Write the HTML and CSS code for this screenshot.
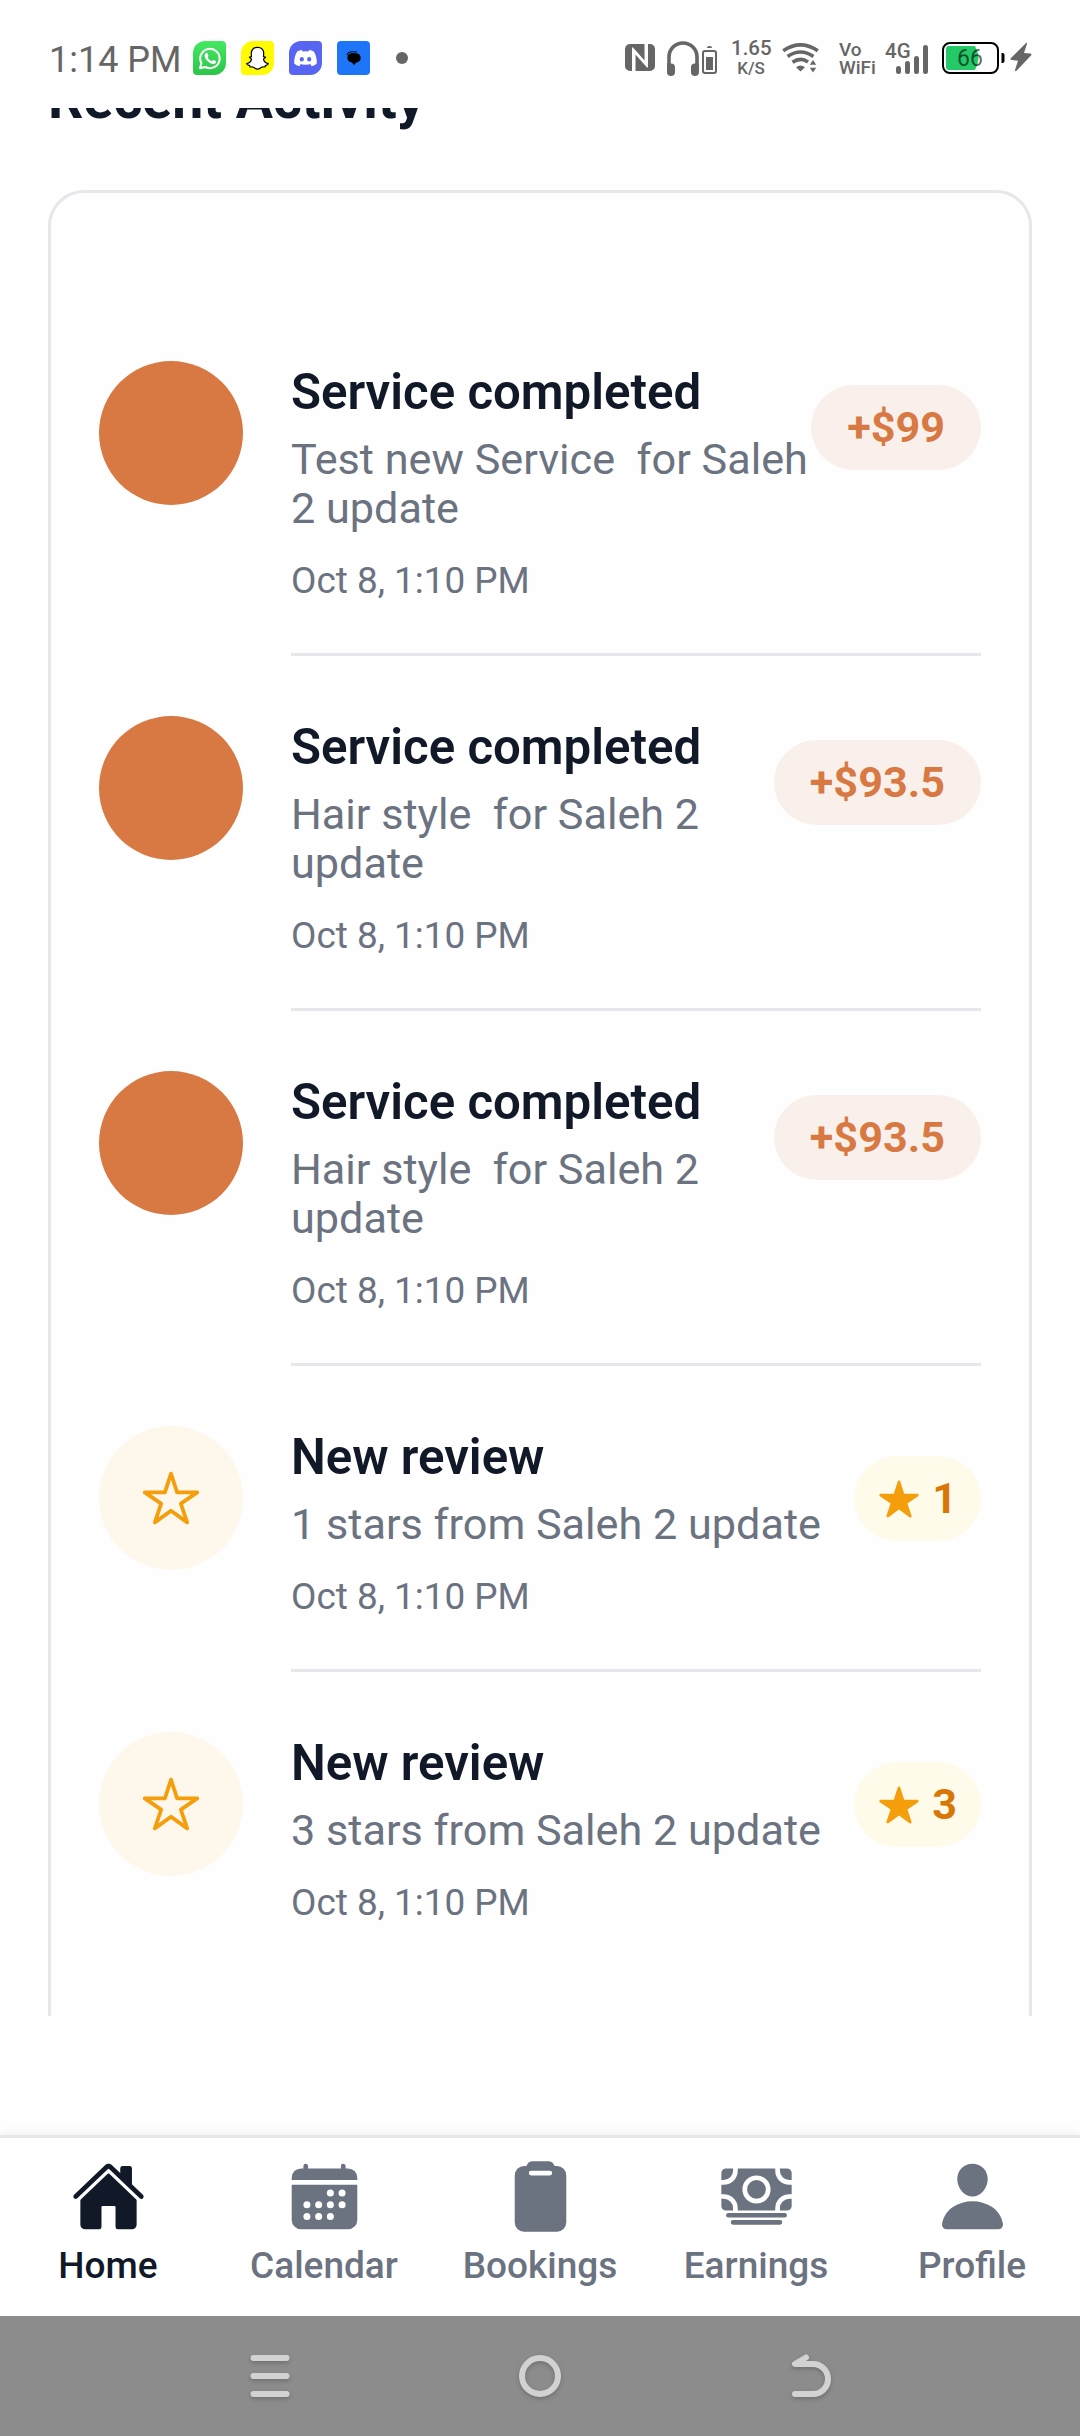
FILE: index.html
```html
<!DOCTYPE html>
<html lang="en">
<head>
<meta charset="utf-8">
<title>Recent Activity</title>
<link rel="stylesheet" href="styles.css">
</head>
<body>
<svg class="defs" aria-hidden="true">
  <symbol id="star-outline" viewBox="0 0 512 512"><path d="M480 208H308L256 48l-52 160H32l140 96-54 160 138-100 138 100-54-160z" fill="none" stroke="currentColor" stroke-width="32" stroke-linejoin="round"/></symbol>
  <symbol id="star" viewBox="0 0 512 512"><path fill="currentColor" d="M394 480a16 16 0 01-9.39-3L256 383.76 127.39 477a16 16 0 01-24.55-18.08L153 310.35 23 221.2a16 16 0 019-29.2h160.38l48.4-148.95a16 16 0 0130.44 0l48.4 149H480a16 16 0 019.05 29.2L359 310.35l50.13 148.53A16 16 0 01394 480z"/></symbol>
</svg>
<div class="screen">
  <header class="status">
    <span class="clock">1:14 PM</span>
    <div class="apps">
      <svg width="33" height="34" viewBox="0 0 33 34"><defs><linearGradient id="wa" x2="0" y2="1"><stop stop-color="#45e862"/><stop offset="1" stop-color="#2bc549"/></linearGradient></defs><path d="M12 0h17a4 4 0 014 4v18a12 12 0 01-12 12H4a4 4 0 01-4-4V12A12 12 0 0112 0z" fill="url(#wa)"/><path d="M7 27.3l1.4-5.2A9.7 9.7 0 1112.3 26z" fill="none" stroke="#fff" stroke-width="2" stroke-linejoin="round"/><path d="M12.4 12.4c.8-.9 1.7-.8 2.1.1l.9 2.1c.2.6-.9 1.5-.7 1.9 1 1.7 2.2 2.8 4 3.6.5.2 1.2-1.4 1.8-1.2l2.2 1.1c.7.4.4 2-.6 2.600-2 1.2-5.2-.2-7.6-2.600-2.5-2.5-3.8-5.9-2.1-7.600z" fill="#fff"/></svg>
      <svg width="33" height="34" viewBox="0 0 33 34"><path d="M12 0h17a4 4 0 014 4v18a12 12 0 01-12 12H4a4 4 0 01-4-4V12A12 12 0 0112 0z" fill="#fffc00"/><path d="M16.5 6.3c3.8 0 6.2 2.5 6.2 6.1l-.2 3.3c.8.2 1.6-.1 2 .4.3.8-1.5 1.300-2 2 .3 2.200 2.700 4 4.800 4.600-.1 1.300-2 1.500-2.900 1.800l-.5 1.500c-1.200.1-2.400-.3-3.500.3-1.300.8-2.200 1.900-3.900 1.900s-2.600-1.100-3.900-1.900c-1.100-.6-2.300-.2-3.500-.3l-.5-1.500c-.9-.3-2.800-.5-2.900-1.800 2.100-.6 4.500-2.400 4.800-4.600-.5-.7-2.300-1.200-2-2 .4-.5 1.200-.2 2-.4l-.2-3.300c0-3.600 2.400-6.100 6.200-6.100z" fill="#fff" stroke="#000" stroke-width="1.2" stroke-linejoin="round"/></svg>
      <svg width="33" height="34" viewBox="0 0 33 34"><path d="M12 0h17a4 4 0 014 4v18a12 12 0 01-12 12H4a4 4 0 01-4-4V12A12 12 0 0112 0z" fill="#5865f2"/><path fill="#fff" fill-rule="evenodd" d="M12.8 9l.9 1.4a19 19 0 015.6 0L20.2 9c1.700.3 3.200.8 4.600 1.500 2.200 3.700 3.300 7.700 2.900 12.200a16 16 0 01-5 2.600l-1.300-2 1.600-.9a18 18 0 01-13 0l1.600.9-1.300 2a16 16 0 01-5-2.600c-.4-4.500.7-8.500 2.900-12.200A18 18 0 0112.800 9zm0 7a2.100 2.300 0 100 4.600 2.100 2.300 0 000-4.600zm7.400 0a2.100 2.300 0 100 4.600 2.100 2.300 0 000-4.600z"/></svg>
      <svg width="33" height="34" viewBox="0 0 33 34"><rect width="33" height="34" rx="4" fill="#1f75f8"/><path d="M9.900 14.200a4 4 0 014-3.300h6" fill="none" stroke="#000" stroke-width="1"/><path d="M14 12.300h5a4.600 4.600 0 011.4 9c-1.600.7-2.800 1.400-3.400 3.200-.8-1.800-1.300-2.500-2.900-3.200a4.600 4.600 0 01-.1-9z"/></svg>
    </div>
    <i class="dot"></i>
    <div class="sys">
      <svg class="nfc" width="30" height="27" viewBox="0 0 30 27"><path fill="#666" d="M5 0h14.500v16.500L8 3.500H7V27H5a5 5 0 01-5-5V5a5 5 0 015-5zM23 0h2a5 5 0 015 5v17a5 5 0 01-5 5H10.500V10.500L22 23.500h1z"/></svg>
      <svg class="phones" width="32" height="35" viewBox="0 0 32 35"><path d="M2 27V16a14 14 0 0128 0v11" fill="none" stroke="#666" stroke-width="3.600"/><path fill="#666" d="M0 22.500h4a4 4 0 014 4V31a4 4 0 01-8 0zM32 22.500h-4a4 4 0 00-4 4V31a4 4 0 008 0z"/></svg>
      <svg class="cell" width="15" height="28" viewBox="0 0 15 28"><path d="M5 2c0-2.700 5-2.700 5 0z" fill="#666"/><rect x="1" y="5" width="13" height="22" rx="2" fill="none" stroke="#666" stroke-width="2"/><path d="M4 11h7v13H4z" fill="#666"/></svg>
      <div class="rate"><b>1.65</b><small>K/S</small></div>
      <svg class="wifi" width="37" height="30" viewBox="0 0 37 30"><g fill="none" stroke="#666" stroke-width="3.600"><path d="M1.200 7.700q17.300-11.800 34.600 0"/><path d="M5.600 13.500q12.900-9 25.800 0"/><path d="M10.500 19.300q8-5.600 15.500-.4"/></g><path fill="#666" d="M14 24.200q4.500-3.300 9 0L18.500 28.500zM31 17l3.200 4.800h-6.400zM31 29.500l3.200-4.800h-6.400z"/></svg>
      <div class="vo"><b>Vo</b><b>WiFi</b></div>
      <div class="net"><b>4G</b><svg width="32" height="29" viewBox="0 0 32 29"><path d="M2.500 23.500v3M11.500 18.500v8M20.500 13.500v13M29.500 2.500v24" stroke="#666" stroke-width="5" stroke-linecap="round"/></svg></div>
      <div class="battery"><svg width="63" height="32" viewBox="0 0 63 32"><rect x="1" y="1" width="55" height="30" rx="7" fill="none" stroke="#000" stroke-width="2"/><path d="M7 4h26q3.500 6 3.500 12T33 28H7a3 3 0 01-3-3V7a3 3 0 013-3z" fill="#25c968"/><path d="M59.500 11h1a2 2 0 012 2v6a2 2 0 01-2 2h-1z"/></svg><span>66</span></div>
      <svg class="bolt" width="22" height="30" viewBox="0 0 22 30"><path fill="#666" d="M16 1L1 16q-1.500 1.800.8 2.100L8 18.800 5 28q0 2 1.500.8L21 13.500q1.300-1.700-.8-1.900l-6.200-.5L17 1.700Q17-.3 16 1z"/></svg>
    </div>
  </header>

  <main class="content">
    <h1>Recent Activity</h1>
    <section class="card">
      <article class="row">
        <div class="avatar done"></div>
        <div class="body">
          <div class="line">
            <div class="info"><h2>Service completed</h2><p>Test new Service  for Saleh 2 update</p><time>Oct 8, 1:10 PM</time></div>
            <div class="pill">+$99</div>
          </div>
        </div>
      </article>
      <article class="row">
        <div class="avatar done"></div>
        <div class="body">
          <div class="line">
            <div class="info"><h2>Service completed</h2><p>Hair style  for Saleh 2 update</p><time>Oct 8, 1:10 PM</time></div>
            <div class="pill">+$93.5</div>
          </div>
        </div>
      </article>
      <article class="row">
        <div class="avatar done"></div>
        <div class="body">
          <div class="line">
            <div class="info"><h2>Service completed</h2><p>Hair style  for Saleh 2 update</p><time>Oct 8, 1:10 PM</time></div>
            <div class="pill">+$93.5</div>
          </div>
        </div>
      </article>
      <article class="row">
        <div class="avatar review"><svg width="60" height="60"><use href="#star-outline"/></svg></div>
        <div class="body">
          <div class="line">
            <div class="info"><h2>New review</h2><p>1 stars from Saleh 2 update</p><time>Oct 8, 1:10 PM</time></div>
            <div class="pill rating"><svg width="42" height="42"><use href="#star"/></svg>1</div>
          </div>
        </div>
      </article>
      <article class="row">
        <div class="avatar review"><svg width="60" height="60"><use href="#star-outline"/></svg></div>
        <div class="body">
          <div class="line">
            <div class="info"><h2>New review</h2><p>3 stars from Saleh 2 update</p><time>Oct 8, 1:10 PM</time></div>
            <div class="pill rating"><svg width="42" height="42"><use href="#star"/></svg>3</div>
          </div>
        </div>
      </article>
    </section>
  </main>

  <nav class="tabs">
    <a class="tab active"><svg viewBox="0 0 512 512"><path d="M261.56 101.28a8 8 0 00-11.06 0L66.4 277.15a8 8 0 00-2.47 5.79L63.9 448a32 32 0 0032 32H192a16 16 0 0016-16V328a8 8 0 018-8h80a8 8 0 018 8v136a16 16 0 0016 16h96.060a32 32 0 0032-32V282.940a8 8 0 00-2.470-5.790z"/><path d="M490.910 244.150l-74.800-71.560V64a16 16 0 00-16-16h-48a16 16 0 00-16 16v32l-57.920-55.380C272.770 35.140 264.710 32 256 32c-8.680 0-16.720 3.140-22.140 8.630l-212.700 203.500c-6.220 6-7 15.870-1.340 22.370A16 16 0 0043 267.560L250.500 69.280a8 8 0 0111.060 0l207.520 198.280a16 16 0 0022.590-.44c6.140-6.360 5.630-16.860-.76-22.970z"/></svg><span>Home</span></a>
    <a class="tab"><svg viewBox="0 0 512 512"><path d="M480 128a64 64 0 00-64-64h-16V48.450c0-8.610-6.620-16-15.230-16.430A16 16 0 00368 48v16H144V48.450c0-8.610-6.620-16-15.230-16.430A16 16 0 00112 48v16H96a64 64 0 00-64 64v12a4 4 0 004 4h440a4 4 0 004-4zM32 416a64 64 0 0064 64h320a64 64 0 0064-64V179a3 3 0 00-3-3H35a3 3 0 00-3 3z"/><g fill="#fff"><circle cx="296" cy="232" r="24"/><circle cx="376" cy="232" r="24"/><circle cx="136" cy="312" r="24"/><circle cx="216" cy="312" r="24"/><circle cx="296" cy="312" r="24"/><circle cx="376" cy="312" r="24"/><circle cx="136" cy="392" r="24"/><circle cx="216" cy="392" r="24"/><circle cx="296" cy="392" r="24"/></g></svg><span>Calendar</span></a>
    <a class="tab"><svg viewBox="0 0 512 512"><path d="M368 48h-11.410a8 8 0 01-7.440-5.080A42.180 42.180 0 00309.870 16H202.130a42.180 42.180 0 00-39.280 26.920 8 8 0 01-7.440 5.080H144a64 64 0 00-64 64v320a64 64 0 0064 64h224a64 64 0 0064-64V112a64 64 0 00-64-64zm-48.130 64H192.130a16 16 0 010-32h127.740a16 16 0 010 32z"/></svg><span>Bookings</span></a>
    <a class="tab"><svg viewBox="0 0 512 512"><path d="M448 400H64a16 16 0 010-32h384a16 16 0 010 32zM416 448H96a16 16 0 010-32h320a16 16 0 010 32zM32 272H16v48a32 32 0 0032 32h48v-16a64.070 64.070 0 00-64-64z"/><path fill-rule="evenodd" d="M480 240h16v-64h-16a96.110 96.110 0 01-96-96V64H128v16a96.110 96.110 0 01-96 96H16v64h16a96.110 96.110 0 0196 96v16h256v-16a96.110 96.110 0 0196-96zM256 304a96 96 0 1196-96 96.110 96.110 0 01-96 96z"/><circle cx="256" cy="208" r="64"/><path d="M480 272a64.070 64.070 0 00-64 64v16h48a32 32 0 0032-32v-48zM480 144h16V96a32 32 0 00-32-32h-48v16a64.070 64.070 0 0064 64zM96 80V64H48a32 32 0 00-32 32v48h16a64.070 64.070 0 0064-64z"/></svg><span>Earnings</span></a>
    <a class="tab"><svg viewBox="0 0 512 512"><path d="M332.640 64.580C313.180 43.570 286 32 256 32c-30.160 0-57.430 11.500-76.800 32.380-19.580 21.110-29.120 49.800-26.880 80.780C156.760 206.280 203.270 256 256 256s99.160-49.710 103.670-110.820c2.270-30.700-7.330-59.330-27.030-80.600zM432 480H80a31 31 0 01-24.200-11.130c-6.500-7.770-9.120-18.380-7.180-29.110C57.060 392.940 83.400 353.610 124.800 326c36.780-24.510 83.370-38 131.200-38s94.420 13.500 131.200 38c41.400 27.600 67.740 66.930 76.180 113.750 1.940 10.730-.68 21.340-7.180 29.110A31 31 0 01432 480z"/></svg><span>Profile</span></a>
  </nav>

  <footer class="softkeys">
    <svg viewBox="0 0 60 60"><path d="M13.500 12h33M13.500 30h33M13.500 48h33"/></svg>
    <svg viewBox="0 0 60 60"><circle cx="30" cy="30" r="18"/></svg>
    <svg viewBox="0 0 60 60"><path d="M26 11.500L15 18h18a15 15 0 010 30H15"/></svg>
  </footer>
</div>
</body>
</html>
```
FILE: styles.css
```css
* { box-sizing: border-box; margin: 0; padding: 0; }

body {
  width: 1080px;
  background: #fefefe;
  font-family: Roboto, "Liberation Sans", sans-serif;
  color: #111827;
}

svg { display: block; flex: none; }
.defs { width: 0; height: 0; position: absolute; }

.screen {
  height: 2436px;
  display: flex;
  flex-direction: column;
  overflow: hidden;
}

/* Status bar */
.status {
  height: 108px;
  flex: none;
  display: flex;
  align-items: flex-start;
  padding: 41px 48px 0 49px;
  color: #666;
}
.clock { font-size: 36px; line-height: 42px; margin-top: -2px; width: 144px; white-space: nowrap; }
.apps { display: flex; gap: 15px; }
.dot { width: 12px; height: 12px; border-radius: 50%; background: #666; margin: 11px 0 0 26px; }
.sys { display: flex; align-items: flex-start; margin-left: auto; }
.sys b { font-weight: 500; display: block; }
.nfc { margin-top: 3px; }
.phones { margin-left: 12px; }
.cell { margin: 5px 0 0 3px; }
.rate { width: 40px; margin-left: 14px; margin-right: 1px; margin-top: -5px; text-align: center; }
.rate b { font-size: 20.5px; line-height: 24px; }
.rate small { display: block; font-size: 17px; line-height: 16px; font-weight: 500; }
.wifi { margin: 2px 0 0 10px; }
.vo { width: 38px; margin-left: 20px; }
.vo b { font-size: 19px; line-height: 18px; }
.net { width: 43px; height: 34px; margin-left: 8px; position: relative; }
.net b { font-size: 20.5px; line-height: 20px; }
.net svg { position: absolute; right: 0; top: 4px; }
.battery { margin: 1px 0 0 14px; position: relative; }
.battery span { position: absolute; left: 15px; top: 4px; font-size: 23px; line-height: 25px; color: rgba(0, 0, 0, 0.6); }
.bolt { margin-left: 5px; margin-top: 1px; }

/* Scrolled activity list */
.content {
  height: 1908px;
  flex: none;
  overflow: hidden;
  padding: 0 48px;
}
h1 { font-size: 55.4px; line-height: 64px; font-weight: 700; margin-top: -40px; }
.card {
  margin-top: 58px;
  height: 2000px;
  padding: 168px 48px 0;
  border: 3px solid #e5e7eb;
  border-radius: 36px;
}
.row { display: flex; gap: 48px; margin-bottom: 60px; }
.avatar {
  width: 144px;
  height: 144px;
  flex: none;
  border-radius: 50%;
  display: flex;
  align-items: center;
  justify-content: center;
}
.done { background: #d87943; }
.review { background: #fef7ec; color: #f59e0b; }
.body { flex: 1; border-bottom: 3px solid #e5e7eb; padding-bottom: 51px; }
.row:last-child .body { border-bottom: 0; }
.line { display: flex; align-items: flex-start; }
.info { flex: 1; padding-top: 3px; }
h2 { font-size: 49.2px; line-height: 56px; font-weight: 600; }
.info p {
  font-size: 43.2px;
  line-height: 49px;
  margin-top: 15px;
  color: #6b7280;
  white-space: pre-wrap;
}
time { display: block; font-size: 36.9px; line-height: 42px; margin-top: 27px; color: #6b7280; }
.pill {
  margin-top: 24px;
  padding: 18px 36px;
  border-radius: 43px;
  background: #faf0eb;
  color: #d87943;
  font-size: 43.2px;
  line-height: 49px;
  font-weight: 700;
}
.rating {
  margin-top: 30px;
  padding: 18px 24px;
  display: flex;
  align-items: center;
  gap: 12px;
  background: #fffbeb;
  color: #d97706;
}
.rating svg { color: #f59e0b; }

/* App tabs */
.tabs {
  height: 181px;
  margin-top: auto;
  flex: none;
  display: flex;
  background: #fff;
  border-top: 3px solid #e5e7eb;
  box-shadow: 0 -3px 9px rgba(0, 0, 0, 0.05);
}
.tab {
  flex: 1;
  display: flex;
  flex-direction: column;
  align-items: center;
  padding-top: 21px;
  color: #6b7280;
  font-size: 37px;
  line-height: 42px;
  font-weight: 500;
}
.tab svg { width: 75px; height: 75px; fill: currentColor; margin-bottom: 11px; }
.active { color: #111827; }

/* System navigation keys */
.softkeys {
  height: 120px;
  flex: none;
  display: flex;
  justify-content: center;
  align-items: center;
  gap: 210px;
  background: #8c8c8c;
}
.softkeys svg {
  width: 60px;
  height: 60px;
  fill: none;
  stroke: #d2d2d2;
  stroke-width: 6;
  stroke-linecap: round;
  stroke-linejoin: round;
  filter: drop-shadow(0 2px 2px rgba(0, 0, 0, 0.2));
}
```
